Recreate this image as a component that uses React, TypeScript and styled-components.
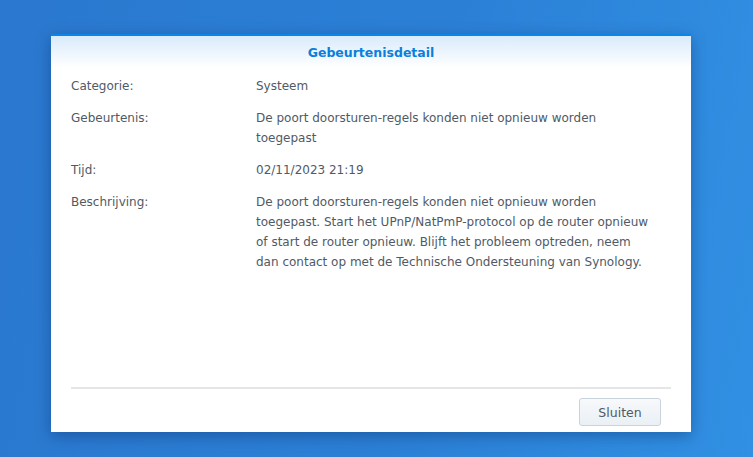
import React from 'react';
import styled, { createGlobalStyle } from 'styled-components';

const GlobalStyle = createGlobalStyle`
  html, body {
    margin: 0;
    padding: 0;
    width: 100%;
    height: 100%;
  }
  body {
    font-family: "DejaVu Sans", Verdana, sans-serif;
    background: linear-gradient(100deg, #2a78cf 0%, #2b80d6 55%, #3190e3 100%);
    overflow: hidden;
  }
`;

const Desktop = styled.div`
  width: 753px;
  height: 457px;
  padding: 34px 0 0 51px;
  box-sizing: border-box;
`;

const Dialog = styled.div`
  width: 640px;
  height: 398px;
  background: #fff;
  border-top: 2px solid #0a86e6;
  box-sizing: border-box;
  box-shadow: 0 4px 14px rgba(0, 30, 80, 0.35);
  display: flex;
  flex-direction: column;
`;

const Header = styled.div`
  height: 32px;
  line-height: 33px;
  text-align: center;
  font-size: 12.5px;
  font-weight: bold;
  color: #0a7fdc;
  background: linear-gradient(to bottom, #d9ebfb 0%, #eef6fd 55%, #ffffff 100%);
`;

const Body = styled.div`
  flex: 1;
  padding: 8px 20px 0 20px;
  display: flex;
  flex-direction: column;
  gap: 12px;
`;

const Row = styled.div`
  display: grid;
  grid-template-columns: 185px 398px;
  font-size: 12px;
  line-height: 20px;
  color: #4f5a66;
`;

const Label = styled.div``;

const Value = styled.div``;

const Footer = styled.div`
  margin: 0 20px;
  border-top: 2px solid #e6e6e6;
  height: 45px;
  box-sizing: border-box;
  display: flex;
  justify-content: flex-end;
  align-items: flex-start;
  padding: 9px 10px 0 0;
`;

const Button = styled.button`
  width: 82px;
  height: 28px;
  border: 1px solid #c9d3dd;
  border-radius: 3px;
  background: linear-gradient(to bottom, #f7f9fb, #eaf0f5);
  font-family: "DejaVu Sans", Verdana, sans-serif;
  font-size: 12.5px;
  color: #4f5a66;
  cursor: pointer;
`;

const rows: { label: string; value: string }[] = [
  { label: 'Categorie:', value: 'Systeem' },
  { label: 'Gebeurtenis:', value: 'De poort doorsturen-regels konden niet opnieuw worden toegepast' },
  { label: 'Tijd:', value: '02/11/2023 21:19' },
  {
    label: 'Beschrijving:',
    value:
      'De poort doorsturen-regels konden niet opnieuw worden toegepast. Start het UPnP/NatPmP-protocol op de router opnieuw of start de router opnieuw. Blijft het probleem optreden, neem dan contact op met de Technische Ondersteuning van Synology.',
  },
];

export default function App() {
  return (
    <>
      <GlobalStyle />
      <Desktop>
        <Dialog>
          <Header>Gebeurtenisdetail</Header>
          <Body>
            {rows.map((r) => (
              <Row key={r.label}>
                <Label>{r.label}</Label>
                <Value>{r.value}</Value>
              </Row>
            ))}
          </Body>
          <Footer>
            <Button>Sluiten</Button>
          </Footer>
        </Dialog>
      </Desktop>
    </>
  );
}
